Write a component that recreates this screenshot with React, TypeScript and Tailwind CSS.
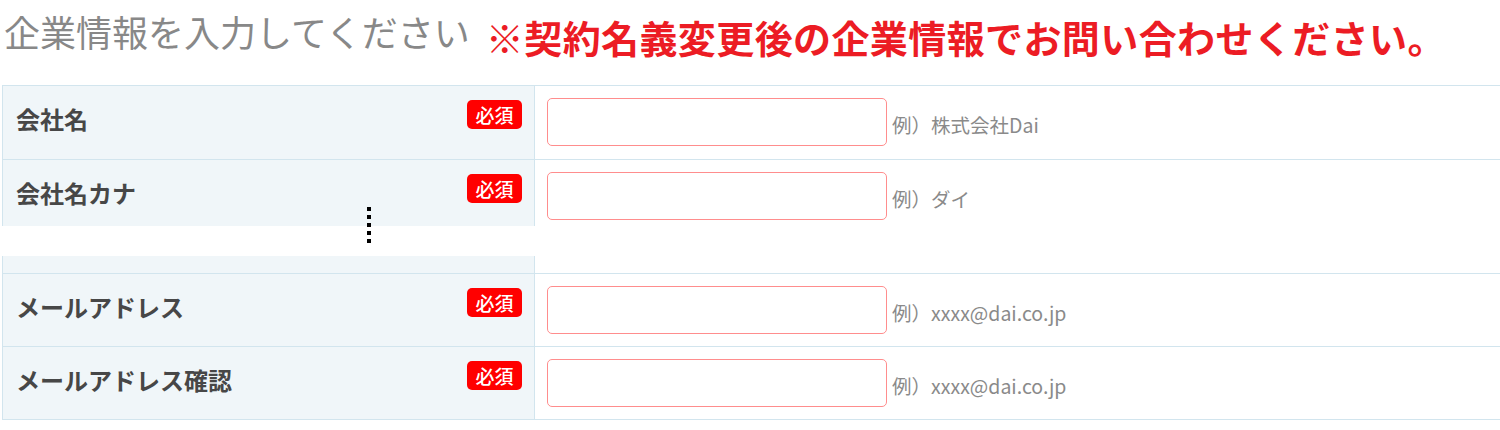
const font = "font-['Noto_Sans_CJK_JP','Noto_Sans',sans-serif]";

type Field = {
  label: string;
  example: string;
  rowClass: string;
};

const topFields: Field[] = [
  { label: "会社名", example: "例）株式会社Dai", rowClass: "h-[74px]" },
  { label: "会社名カナ", example: "例）ダイ", rowClass: "h-[67px]" },
];

const bottomFields: Field[] = [
  { label: "メールアドレス", example: "例）xxxx@dai.co.jp", rowClass: "h-[73px]" },
  { label: "メールアドレス確認", example: "例）xxxx@dai.co.jp", rowClass: "h-[73px]" },
];

function Row({ field }: { field: Field }) {
  return (
    <div className={`flex border-t border-[#d2e5ee] ${field.rowClass}`}>
      {/* label cell */}
      <div className="flex w-[533px] shrink-0 justify-between border-x border-[#d2e5ee] bg-[#f0f6f9]">
        <span className="pl-[13px] pt-[16px] text-[24px] leading-[34px] font-bold text-[#474747]">
          {field.label}
        </span>
        <span className="mr-[12px] mt-[14px] flex h-[29px] w-[55px] items-center justify-center rounded-[5px] bg-[#ff0000] text-[19px] leading-none font-medium text-white">
          必須
        </span>
      </div>
      {/* input cell */}
      <div className="flex flex-1 items-start">
        <input
          type="text"
          className="ml-[12px] mt-[12px] h-[48px] w-[340px] rounded-[5px] border border-[#ff8d8d] bg-white outline-none"
        />
        <span className="ml-[5px] pt-[25px] text-[19.5px] leading-[28px] text-[#8a8a8a]">
          {field.example}
        </span>
      </div>
    </div>
  );
}

export default function App() {
  return (
    <div className={`relative h-[430px] w-[1500px] overflow-hidden bg-white ${font}`}>
      {/* heading */}
      <div className="flex h-[85px] items-start pl-[4px]">
        <h2 className="mt-[11px] text-[36px] leading-[40px] font-normal text-[#888888]">
          企業情報を入力してください
        </h2>
        <p className="ml-[16px] mt-[16px] text-[38px] leading-[42px] font-bold tracking-[0.4px] text-[#ec1c24]">
          ※契約名義変更後の企業情報でお問い合わせください。
        </p>
      </div>

      {/* first block of rows */}
      <div className="ml-[2px]">
        {topFields.map((f) => (
          <Row key={f.label} field={f} />
        ))}
      </div>

      {/* omitted rows */}
      <div className="h-[30px]" />

      <div className="ml-[2px]">
        <div className="flex h-[17px]">
          <div className="w-[533px] shrink-0 border-x border-[#d2e5ee] bg-[#f0f6f9]" />
        </div>
        {bottomFields.map((f) => (
          <Row key={f.label} field={f} />
        ))}
        <div className="border-t border-[#d2e5ee]" />
      </div>

      {/* vertical ellipsis marker */}
      <div className="absolute left-[367px] top-[207px] flex flex-col gap-[4px]">
        {[0, 1, 2, 3, 4].map((i) => (
          <span key={i} className="block h-[4px] w-[4px] bg-black" />
        ))}
      </div>
    </div>
  );
}
